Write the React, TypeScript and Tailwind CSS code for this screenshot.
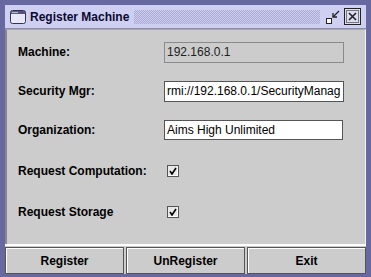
import React from "react";

const font = { fontFamily: '"Liberation Sans", Arial, sans-serif' };

function Check() {
  return (
    <div className="w-[12px] h-[12px] border border-[#555] bg-[#e8e8e8] flex items-center justify-center shadow-[inset_-1px_-1px_0_#fff]">
      <svg width="8" height="8" viewBox="0 0 8 8">
        <path d="M1 4 L3 7 L7 1" stroke="#000" strokeWidth="1.6" fill="none" />
      </svg>
    </div>
  );
}

export default function App() {
  return (
    <div
      className="w-[371px] h-[277px] bg-[#6868a0] pt-[5px] pl-[5px] pr-[5px] pb-[3px] flex flex-col"
      style={font}
    >
      <div className="h-[24px] bg-[#cfcff2] flex items-center pl-[4px] pr-[5px] border-b border-[#8c8cae]">
        <svg width="18" height="16" viewBox="0 0 18 16" className="mr-[3px]">
          <rect x="1.5" y="1.5" width="15" height="13" rx="2" fill="#e8e8f6" stroke="#333355" />
          <rect x="2" y="2" width="14" height="3" fill="#555577" />
          <circle cx="4" cy="3.5" r="0.7" fill="#fff" />
          <circle cx="6" cy="3.5" r="0.7" fill="#fff" />
          <circle cx="8" cy="3.5" r="0.7" fill="#fff" />
        </svg>
        <span className="text-[12px] font-bold text-[#0a0a30] whitespace-nowrap">Register Machine</span>
        <div
          className="flex-1 h-[14px] mx-[5px]"
          style={{
            backgroundImage: "repeating-conic-gradient(#a8a8d0 0 25%, transparent 0 50%)",
            backgroundSize: "2px 2px",
          }}
        />
        <svg width="16" height="16" viewBox="0 0 16 16" className="mr-[3px]">
          <rect x="1.5" y="9.5" width="5" height="5" fill="#fff" stroke="#222" />
          <path d="M8 8 L14 2" stroke="#222" strokeWidth="1.3" />
          <path d="M8 4 L8 8 L12 8" stroke="#222" strokeWidth="1.3" fill="none" />
        </svg>
        <svg width="17" height="17" viewBox="0 0 17 17">
          <rect x="0.5" y="0.5" width="16" height="16" fill="#dcdcf0" stroke="#222" />
          <rect x="2.5" y="2.5" width="12" height="12" fill="none" stroke="#777" />
          <path d="M5 5 L12 12 M12 5 L5 12" stroke="#222" strokeWidth="1.6" />
        </svg>
      </div>
      <div className="flex-1 bg-[#cccccc] border-l-[2px] border-l-[#888] border-r border-r-[#f4f4f4] border-t border-t-[#aaa] flex flex-col pl-[11px] pt-[11px]">
        <div className="h-[22px] flex items-center">
          <span className="w-[146px] text-[12px] font-bold text-black">Machine:</span>
          <div className="w-[180px] h-[21px] border border-[#8a8a8a] bg-[#cccccc] text-[12px] text-[#222] flex items-center pl-[2px]">
            192.168.0.1
          </div>
        </div>
        <div className="h-[22px] flex items-center mt-[17px]">
          <span className="w-[146px] text-[12px] font-bold text-black">Security Mgr:</span>
          <div className="w-[180px] h-[21px] border border-[#555] bg-white text-[12px] text-black flex items-center pl-[2px] overflow-hidden whitespace-nowrap">
            rmi://192.168.0.1/SecurityManag
          </div>
        </div>
        <div className="h-[22px] flex items-center mt-[17px]">
          <span className="w-[146px] text-[12px] font-bold text-black">Organization:</span>
          <div className="w-[179px] h-[20px] border border-[#555] bg-white text-[12px] text-black flex items-center pl-[2px]">
            Aims High Unlimited
          </div>
        </div>
        <div className="h-[22px] flex items-center mt-[19px]">
          <span className="w-[149px] text-[12px] font-bold text-black">Request Computation:</span>
          <Check />
        </div>
        <div className="h-[22px] flex items-center mt-[19px]">
          <span className="w-[149px] text-[12px] font-bold text-black">Request Storage</span>
          <Check />
        </div>
      </div>
      <div className="h-[30px] bg-[#cccccc] border-t-[2px] border-t-white flex gap-[2px] pt-[1px]">
        {["Register", "UnRegister", "Exit"].map((t) => (
          <div
            key={t}
            className="flex-1 h-[27px] border border-[#555] shadow-[inset_1px_1px_0_#fff] bg-[#cccccc] flex items-center justify-center text-[12px] font-bold text-black"
          >
            {t}
          </div>
        ))}
      </div>
    </div>
  );
}
